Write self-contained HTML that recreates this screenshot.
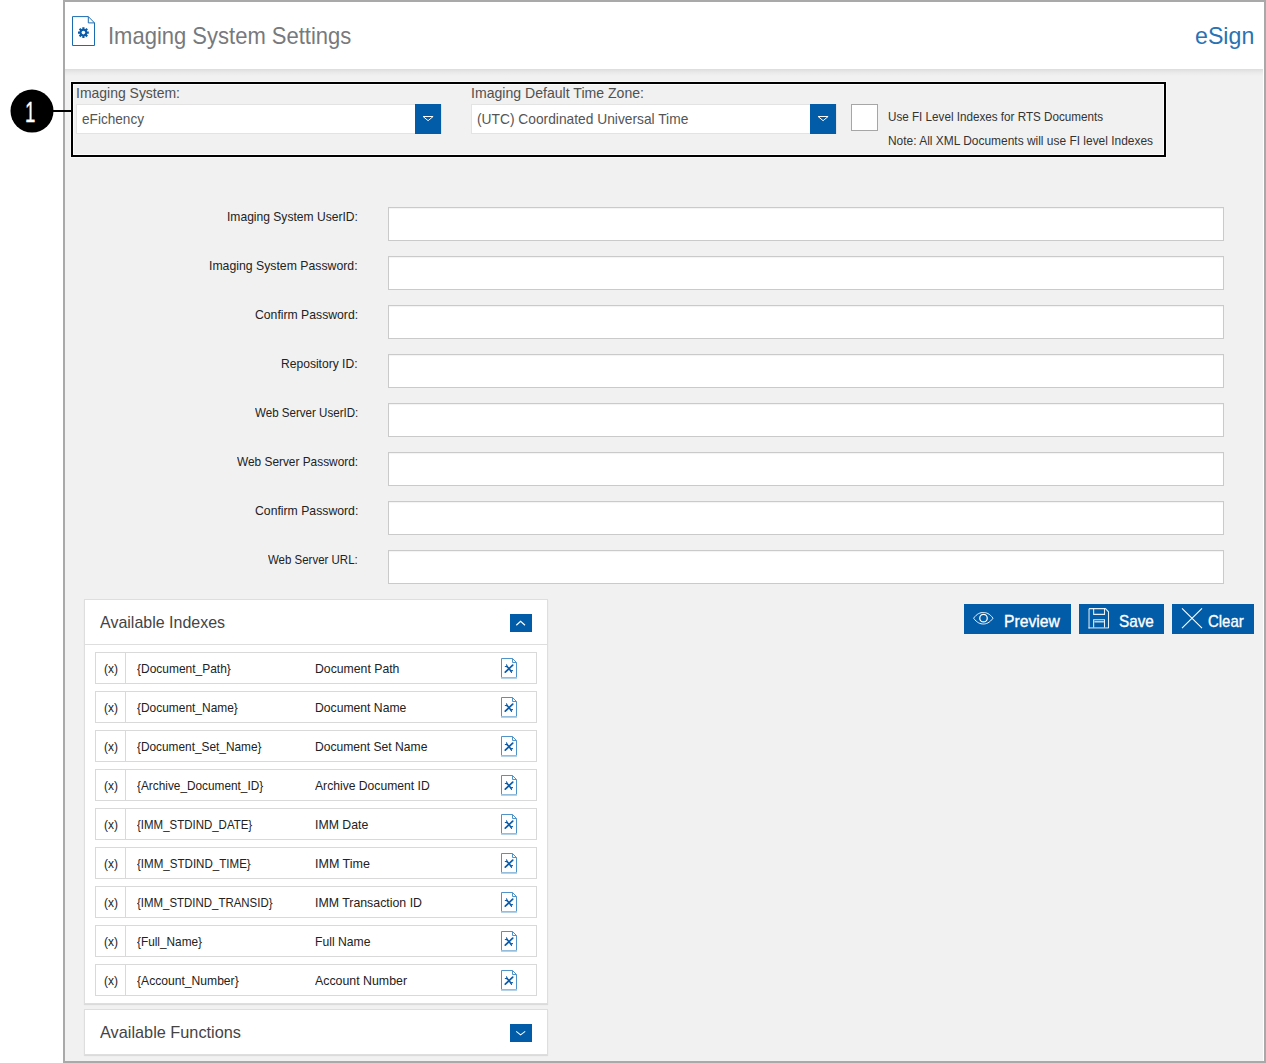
<!DOCTYPE html><html><head><meta charset="utf-8"><title>Imaging System Settings</title><style>
*{box-sizing:border-box;margin:0;padding:0}
html,body{width:1266px;height:1063px;overflow:hidden;background:#fff}
body{font-family:"Liberation Sans",sans-serif;position:relative;color:#333}
.a{position:absolute}
.t{position:absolute;white-space:nowrap;line-height:1;transform-origin:0 0}
#frame{left:63px;top:0;width:1203px;height:1063px;border:2px solid #a9a9a9;background:#f1f1f1}
#hdr{left:65px;top:2px;width:1199px;height:67px;background:#fff}
#hshadow{left:65px;top:69px;width:1198px;height:7px;background:linear-gradient(#dcdcdc,#e9e9e9 45%,#f1f1f1)}
#rstripe{left:1263px;top:2px;width:1px;height:1059px;background:#fff}
#box{left:71px;top:82px;width:1095px;height:75px;border:2px solid #000;box-shadow:0 0 0 1px rgba(255,255,255,.55),inset 0 0 0 1px rgba(255,255,255,.75)}
#circ{left:0;top:0;width:43px;height:43px;border-radius:50%;background:#000;transform:translate(10.5px,89.6px)}
#cline{left:52px;top:110px;width:20px;height:2px;background:#000;z-index:2}
.sel{height:30px;background:#fff;border:1px solid #e3e3e3}
.arr{width:26px;height:30px;background:#035ca7}
.cb{left:851px;top:104px;width:27px;height:27px;background:#fff;border:1px solid #a6a6a6}
.fi{left:388px;width:836px;height:34px;background:#fff;border:1px solid #cacaca;box-shadow:inset 0 1px 1px rgba(0,0,0,.05)}
.panel{left:84px;width:464px;background:#fff;border:1px solid #dedede;box-shadow:0 1px 1px rgba(0,0,0,.09)}
.tog{left:510px;width:22px;height:18px;background:#035ca7}
.irow{left:95px;width:442px;height:32px;background:#fff;border:1px solid #d9d9d9}
.idiv{left:125px;width:1px;background:#d9d9d9}
.btn{top:604px;height:30px;background:#035ca7}
</style></head><body>
<div id="frame" class="a"></div><div id="hdr" class="a"></div><div id="hshadow" class="a"></div><div id="rstripe" class="a"></div>
<svg class="a" style="left:72px;top:16px" width="24" height="31" viewBox="0 0 24 31"><path d="M.5 .6 H16.3 L22.5 6.9 V29.5 H.5 Z" fill="#fff" stroke="#1b6bb0" stroke-width="1"/><path d="M16.3 .6 V6.9 H22.5" fill="none" stroke="#1b6bb0" stroke-width="1"/><g transform="translate(11.4,16.6)"><g stroke="#0a5ca8" stroke-width="2.2"><path d="M0 -5.4V5.4M-5.4 0H5.4M-3.8 -3.8L3.8 3.8M-3.8 3.8L3.8 -3.8"/></g><circle r="3.8" fill="#0a5ca8"/><circle r="1.8" fill="#fff"/></g></svg>
<div id="circ" class="a"></div><div id="cline" class="a"></div><div id="box" class="a"></div>
<div class="a sel" style="left:76px;top:104px;width:366px"></div>
<div class="a arr" style="left:415px;top:104px"><svg width="26" height="30" viewBox="0 0 26 30"><path d="M8.1 12.5 H18.1 L13.1 16.7 Z" fill="none" stroke="#fff" stroke-width="1"/></svg></div>
<div class="a sel" style="left:471px;top:104px;width:366px"></div>
<div class="a arr" style="left:810px;top:104px"><svg width="26" height="30" viewBox="0 0 26 30"><path d="M8.1 12.5 H18.1 L13.1 16.7 Z" fill="none" stroke="#fff" stroke-width="1"/></svg></div>
<div class="a cb"></div>
<div class="a fi" style="top:207px"></div>
<div class="a fi" style="top:256px"></div>
<div class="a fi" style="top:305px"></div>
<div class="a fi" style="top:354px"></div>
<div class="a fi" style="top:403px"></div>
<div class="a fi" style="top:452px"></div>
<div class="a fi" style="top:501px"></div>
<div class="a fi" style="top:550px"></div>
<div class="a panel" style="top:599px;height:405px"></div>
<div class="a" style="left:85px;top:644px;width:462px;height:1px;background:#dedede"></div>
<div class="a tog" style="top:614px"><svg width="22" height="18" viewBox="0 0 22 18"><path d="M6.3 11.2 L10.6 7.2 L15 11.2" fill="none" stroke="#fff" stroke-width="1.2"/></svg></div>
<div class="a irow" style="top:652px"></div><div class="a idiv" style="top:653px;height:30px"></div>
<svg class="a" style="left:501px;top:658px" width="17" height="22" viewBox="0 0 17 22"><path d="M.5 .5 H11.5 L15.5 4.5 V19.6 H.5 Z" fill="#fff" stroke="#4f93c9" stroke-width="1"/><path d="M11.5 .5 V4.5 H15.5" fill="none" stroke="#4f93c9" stroke-width="1"/><rect x="0" y="19.1" width="16" height="1.6" fill="#9cc2df"/><g stroke="#0a5ca8" fill="none" stroke-linecap="round"><path d="M11.7 7.2 L4.3 14.2" stroke-width="1.7"/><path d="M6.3 8.7 L9.9 12.9" stroke-width="1.6"/><path d="M5.5 6.7 L6.3 8.6 L4.3 8.5 M11.5 12.6 L9.7 12.8 L10.5 14.4" stroke-width="1.1" stroke-linejoin="round"/></g></svg>
<div class="a irow" style="top:691px"></div><div class="a idiv" style="top:692px;height:30px"></div>
<svg class="a" style="left:501px;top:697px" width="17" height="22" viewBox="0 0 17 22"><path d="M.5 .5 H11.5 L15.5 4.5 V19.6 H.5 Z" fill="#fff" stroke="#4f93c9" stroke-width="1"/><path d="M11.5 .5 V4.5 H15.5" fill="none" stroke="#4f93c9" stroke-width="1"/><rect x="0" y="19.1" width="16" height="1.6" fill="#9cc2df"/><g stroke="#0a5ca8" fill="none" stroke-linecap="round"><path d="M11.7 7.2 L4.3 14.2" stroke-width="1.7"/><path d="M6.3 8.7 L9.9 12.9" stroke-width="1.6"/><path d="M5.5 6.7 L6.3 8.6 L4.3 8.5 M11.5 12.6 L9.7 12.8 L10.5 14.4" stroke-width="1.1" stroke-linejoin="round"/></g></svg>
<div class="a irow" style="top:730px"></div><div class="a idiv" style="top:731px;height:30px"></div>
<svg class="a" style="left:501px;top:736px" width="17" height="22" viewBox="0 0 17 22"><path d="M.5 .5 H11.5 L15.5 4.5 V19.6 H.5 Z" fill="#fff" stroke="#4f93c9" stroke-width="1"/><path d="M11.5 .5 V4.5 H15.5" fill="none" stroke="#4f93c9" stroke-width="1"/><rect x="0" y="19.1" width="16" height="1.6" fill="#9cc2df"/><g stroke="#0a5ca8" fill="none" stroke-linecap="round"><path d="M11.7 7.2 L4.3 14.2" stroke-width="1.7"/><path d="M6.3 8.7 L9.9 12.9" stroke-width="1.6"/><path d="M5.5 6.7 L6.3 8.6 L4.3 8.5 M11.5 12.6 L9.7 12.8 L10.5 14.4" stroke-width="1.1" stroke-linejoin="round"/></g></svg>
<div class="a irow" style="top:769px"></div><div class="a idiv" style="top:770px;height:30px"></div>
<svg class="a" style="left:501px;top:775px" width="17" height="22" viewBox="0 0 17 22"><path d="M.5 .5 H11.5 L15.5 4.5 V19.6 H.5 Z" fill="#fff" stroke="#4f93c9" stroke-width="1"/><path d="M11.5 .5 V4.5 H15.5" fill="none" stroke="#4f93c9" stroke-width="1"/><rect x="0" y="19.1" width="16" height="1.6" fill="#9cc2df"/><g stroke="#0a5ca8" fill="none" stroke-linecap="round"><path d="M11.7 7.2 L4.3 14.2" stroke-width="1.7"/><path d="M6.3 8.7 L9.9 12.9" stroke-width="1.6"/><path d="M5.5 6.7 L6.3 8.6 L4.3 8.5 M11.5 12.6 L9.7 12.8 L10.5 14.4" stroke-width="1.1" stroke-linejoin="round"/></g></svg>
<div class="a irow" style="top:808px"></div><div class="a idiv" style="top:809px;height:30px"></div>
<svg class="a" style="left:501px;top:814px" width="17" height="22" viewBox="0 0 17 22"><path d="M.5 .5 H11.5 L15.5 4.5 V19.6 H.5 Z" fill="#fff" stroke="#4f93c9" stroke-width="1"/><path d="M11.5 .5 V4.5 H15.5" fill="none" stroke="#4f93c9" stroke-width="1"/><rect x="0" y="19.1" width="16" height="1.6" fill="#9cc2df"/><g stroke="#0a5ca8" fill="none" stroke-linecap="round"><path d="M11.7 7.2 L4.3 14.2" stroke-width="1.7"/><path d="M6.3 8.7 L9.9 12.9" stroke-width="1.6"/><path d="M5.5 6.7 L6.3 8.6 L4.3 8.5 M11.5 12.6 L9.7 12.8 L10.5 14.4" stroke-width="1.1" stroke-linejoin="round"/></g></svg>
<div class="a irow" style="top:847px"></div><div class="a idiv" style="top:848px;height:30px"></div>
<svg class="a" style="left:501px;top:853px" width="17" height="22" viewBox="0 0 17 22"><path d="M.5 .5 H11.5 L15.5 4.5 V19.6 H.5 Z" fill="#fff" stroke="#4f93c9" stroke-width="1"/><path d="M11.5 .5 V4.5 H15.5" fill="none" stroke="#4f93c9" stroke-width="1"/><rect x="0" y="19.1" width="16" height="1.6" fill="#9cc2df"/><g stroke="#0a5ca8" fill="none" stroke-linecap="round"><path d="M11.7 7.2 L4.3 14.2" stroke-width="1.7"/><path d="M6.3 8.7 L9.9 12.9" stroke-width="1.6"/><path d="M5.5 6.7 L6.3 8.6 L4.3 8.5 M11.5 12.6 L9.7 12.8 L10.5 14.4" stroke-width="1.1" stroke-linejoin="round"/></g></svg>
<div class="a irow" style="top:886px"></div><div class="a idiv" style="top:887px;height:30px"></div>
<svg class="a" style="left:501px;top:892px" width="17" height="22" viewBox="0 0 17 22"><path d="M.5 .5 H11.5 L15.5 4.5 V19.6 H.5 Z" fill="#fff" stroke="#4f93c9" stroke-width="1"/><path d="M11.5 .5 V4.5 H15.5" fill="none" stroke="#4f93c9" stroke-width="1"/><rect x="0" y="19.1" width="16" height="1.6" fill="#9cc2df"/><g stroke="#0a5ca8" fill="none" stroke-linecap="round"><path d="M11.7 7.2 L4.3 14.2" stroke-width="1.7"/><path d="M6.3 8.7 L9.9 12.9" stroke-width="1.6"/><path d="M5.5 6.7 L6.3 8.6 L4.3 8.5 M11.5 12.6 L9.7 12.8 L10.5 14.4" stroke-width="1.1" stroke-linejoin="round"/></g></svg>
<div class="a irow" style="top:925px"></div><div class="a idiv" style="top:926px;height:30px"></div>
<svg class="a" style="left:501px;top:931px" width="17" height="22" viewBox="0 0 17 22"><path d="M.5 .5 H11.5 L15.5 4.5 V19.6 H.5 Z" fill="#fff" stroke="#4f93c9" stroke-width="1"/><path d="M11.5 .5 V4.5 H15.5" fill="none" stroke="#4f93c9" stroke-width="1"/><rect x="0" y="19.1" width="16" height="1.6" fill="#9cc2df"/><g stroke="#0a5ca8" fill="none" stroke-linecap="round"><path d="M11.7 7.2 L4.3 14.2" stroke-width="1.7"/><path d="M6.3 8.7 L9.9 12.9" stroke-width="1.6"/><path d="M5.5 6.7 L6.3 8.6 L4.3 8.5 M11.5 12.6 L9.7 12.8 L10.5 14.4" stroke-width="1.1" stroke-linejoin="round"/></g></svg>
<div class="a irow" style="top:964px"></div><div class="a idiv" style="top:965px;height:30px"></div>
<svg class="a" style="left:501px;top:970px" width="17" height="22" viewBox="0 0 17 22"><path d="M.5 .5 H11.5 L15.5 4.5 V19.6 H.5 Z" fill="#fff" stroke="#4f93c9" stroke-width="1"/><path d="M11.5 .5 V4.5 H15.5" fill="none" stroke="#4f93c9" stroke-width="1"/><rect x="0" y="19.1" width="16" height="1.6" fill="#9cc2df"/><g stroke="#0a5ca8" fill="none" stroke-linecap="round"><path d="M11.7 7.2 L4.3 14.2" stroke-width="1.7"/><path d="M6.3 8.7 L9.9 12.9" stroke-width="1.6"/><path d="M5.5 6.7 L6.3 8.6 L4.3 8.5 M11.5 12.6 L9.7 12.8 L10.5 14.4" stroke-width="1.1" stroke-linejoin="round"/></g></svg>
<div class="a panel" style="top:1009px;height:46px"></div>
<div class="a tog" style="top:1024px"><svg width="22" height="18" viewBox="0 0 22 18"><path d="M6.2 7.4 L10.6 10.8 L15.2 7.4" fill="none" stroke="#fff" stroke-width="1.05"/></svg></div>
<div class="a btn" style="left:964px;width:107px"><svg class="a" style="left:9.45px;top:7.7px" width="21" height="13" viewBox="0 0 21 13"><path d="M.6 6.2 C4 1.5,7.4 .5,10.3 .5 C13.2 .5,16.6 1.5,20 6.2 C16.6 10.9,13.2 12,10.3 12 C7.4 12,4 10.9,.6 6.2 Z" fill="none" stroke="#fff" stroke-opacity=".92" stroke-width="1"/><circle cx="10.5" cy="6.2" r="3.75" fill="none" stroke="#fff" stroke-width="1.25"/></svg></div>
<div class="a btn" style="left:1079px;width:85px"><svg class="a" style="left:9px;top:4px" width="22" height="22" viewBox="0 0 22 22"><rect x=".2" y=".4" width="1.7" height="20.3" rx=".8" fill="#fff" fill-opacity=".55"/><rect x=".4" y="19" width="20.5" height="1.7" rx=".6" fill="#fff" fill-opacity=".5"/><path d="M1 .6 H17.4 L20.5 3.8 V20" fill="none" stroke="#fff" stroke-opacity=".9" stroke-width="1.05"/><path d="M5.65 .6 V6.35 H16.5 V.6 M5.65 19.6 V11.65 H16.5 V19.6" fill="none" stroke="#fff" stroke-opacity=".9" stroke-width="1.05"/><path d="M6.4 13.8 H15.9" stroke="#fff" stroke-opacity=".85" stroke-width="1.3"/></svg></div>
<div class="a btn" style="left:1172px;width:82px"><svg class="a" style="left:9px;top:4px" width="22" height="22" viewBox="0 0 22 22"><path d="M1 .4 L21 20.2 M21 .4 L1 20.2" stroke="#fff" stroke-width="1.1"/></svg></div>
<div class="t" style="left:108.02px;top:24px;font-size:23.8px;color:#77797d;transform:scaleX(0.9244)">Imaging System Settings</div>
<div class="t" style="left:1194.93px;top:24px;font-size:23.8px;color:#2a72b2;transform:scaleX(0.9740)">eSign</div>
<div class="t" style="left:25.32px;top:97px;font-size:29.3px;color:#fff;-webkit-text-stroke:.3px #fff;transform:scaleX(0.6395)">1</div>
<div class="t" style="left:76.27px;top:86px;font-size:14.4px;color:#505050;transform:scaleX(0.9704)">Imaging System:</div>
<div class="t" style="left:81.74px;top:112px;font-size:14.4px;color:#555;transform:scaleX(0.9463)">eFichency</div>
<div class="t" style="left:470.51px;top:86px;font-size:14.4px;color:#505050;transform:scaleX(0.9788)">Imaging Default Time Zone:</div>
<div class="t" style="left:476.61px;top:112px;font-size:14.4px;color:#555;transform:scaleX(0.9574)">(UTC) Coordinated Universal Time</div>
<div class="t" style="left:887.70px;top:111px;font-size:12.4px;color:#333;transform:scaleX(0.9414)">Use FI Level Indexes for RTS Documents</div>
<div class="t" style="left:887.65px;top:135px;font-size:12.4px;color:#333;transform:scaleX(0.9638)">Note: All XML Documents will use FI level Indexes</div>
<div class="t" style="left:227.12px;top:211px;font-size:12.4px;color:#222;transform:scaleX(0.9746)">Imaging System UserID:</div>
<div class="t" style="left:209.31px;top:260px;font-size:12.4px;color:#222;transform:scaleX(0.9895)">Imaging System Password:</div>
<div class="t" style="left:254.81px;top:309px;font-size:12.4px;color:#222;transform:scaleX(0.9849)">Confirm Password:</div>
<div class="t" style="left:281.44px;top:358px;font-size:12.4px;color:#222;transform:scaleX(0.9751)">Repository ID:</div>
<div class="t" style="left:254.55px;top:407px;font-size:12.4px;color:#222;transform:scaleX(0.9335)">Web Server UserID:</div>
<div class="t" style="left:236.85px;top:456px;font-size:12.4px;color:#222;transform:scaleX(0.9574)">Web Server Password:</div>
<div class="t" style="left:254.61px;top:505px;font-size:12.4px;color:#222;transform:scaleX(0.9869)">Confirm Password:</div>
<div class="t" style="left:268.15px;top:554px;font-size:12.4px;color:#222;transform:scaleX(0.9261)">Web Server URL:</div>
<div class="t" style="left:100.32px;top:614px;font-size:16.4px;color:#444;transform:scaleX(0.9758)">Available Indexes</div>
<div class="t" style="left:100.02px;top:1024px;font-size:16.4px;color:#444;transform:scaleX(0.9941)">Available Functions</div>
<div class="t" style="left:103.70px;top:663px;font-size:12.4px;color:#222;transform:scaleX(0.9670)">(x)</div>
<div class="t" style="left:137.16px;top:663px;font-size:12.4px;color:#222;transform:scaleX(0.9657)">{Document_Path}</div>
<div class="t" style="left:315.42px;top:663px;font-size:12.4px;color:#222;transform:scaleX(0.9883)">Document Path</div>
<div class="t" style="left:103.70px;top:702px;font-size:12.4px;color:#222;transform:scaleX(0.9670)">(x)</div>
<div class="t" style="left:137.16px;top:702px;font-size:12.4px;color:#222;transform:scaleX(0.9631)">{Document_Name}</div>
<div class="t" style="left:315.43px;top:702px;font-size:12.4px;color:#222;transform:scaleX(0.9825)">Document Name</div>
<div class="t" style="left:103.70px;top:741px;font-size:12.4px;color:#222;transform:scaleX(0.9670)">(x)</div>
<div class="t" style="left:137.16px;top:741px;font-size:12.4px;color:#222;transform:scaleX(0.9560)">{Document_Set_Name}</div>
<div class="t" style="left:315.43px;top:741px;font-size:12.4px;color:#222;transform:scaleX(0.9771)">Document Set Name</div>
<div class="t" style="left:103.70px;top:780px;font-size:12.4px;color:#222;transform:scaleX(0.9670)">(x)</div>
<div class="t" style="left:137.16px;top:780px;font-size:12.4px;color:#222;transform:scaleX(0.9544)">{Archive_Document_ID}</div>
<div class="t" style="left:314.91px;top:780px;font-size:12.4px;color:#222;transform:scaleX(0.9793)">Archive Document ID</div>
<div class="t" style="left:103.70px;top:819px;font-size:12.4px;color:#222;transform:scaleX(0.9670)">(x)</div>
<div class="t" style="left:137.17px;top:819px;font-size:12.4px;color:#222;transform:scaleX(0.9259)">{IMM_STDIND_DATE}</div>
<div class="t" style="left:315.20px;top:819px;font-size:12.4px;color:#222;transform:scaleX(0.9913)">IMM Date</div>
<div class="t" style="left:103.70px;top:858px;font-size:12.4px;color:#222;transform:scaleX(0.9670)">(x)</div>
<div class="t" style="left:137.17px;top:858px;font-size:12.4px;color:#222;transform:scaleX(0.9333)">{IMM_STDIND_TIME}</div>
<div class="t" style="left:315.18px;top:858px;font-size:12.4px;color:#222;transform:scaleX(1.0096)">IMM Time</div>
<div class="t" style="left:103.70px;top:897px;font-size:12.4px;color:#222;transform:scaleX(0.9670)">(x)</div>
<div class="t" style="left:137.17px;top:897px;font-size:12.4px;color:#222;transform:scaleX(0.9238)">{IMM_STDIND_TRANSID}</div>
<div class="t" style="left:315.20px;top:897px;font-size:12.4px;color:#222;transform:scaleX(0.9961)">IMM Transaction ID</div>
<div class="t" style="left:103.70px;top:936px;font-size:12.4px;color:#222;transform:scaleX(0.9670)">(x)</div>
<div class="t" style="left:137.16px;top:936px;font-size:12.4px;color:#222;transform:scaleX(0.9540)">{Full_Name}</div>
<div class="t" style="left:315.43px;top:936px;font-size:12.4px;color:#222;transform:scaleX(0.9817)">Full Name</div>
<div class="t" style="left:103.70px;top:975px;font-size:12.4px;color:#222;transform:scaleX(0.9670)">(x)</div>
<div class="t" style="left:137.16px;top:975px;font-size:12.4px;color:#222;transform:scaleX(0.9777)">{Account_Number}</div>
<div class="t" style="left:314.91px;top:975px;font-size:12.4px;color:#222;transform:scaleX(0.9972)">Account Number</div>
<div class="t" style="left:1004.08px;top:614px;font-size:16.6px;color:#fff;-webkit-text-stroke:.35px #fff;transform:scaleX(0.9456)">Preview</div>
<div class="t" style="left:1119.34px;top:614px;font-size:16.6px;color:#fff;-webkit-text-stroke:.35px #fff;transform:scaleX(0.9215)">Save</div>
<div class="t" style="left:1207.99px;top:614px;font-size:16.6px;color:#fff;-webkit-text-stroke:.35px #fff;transform:scaleX(0.8997)">Clear</div>
</body></html>
